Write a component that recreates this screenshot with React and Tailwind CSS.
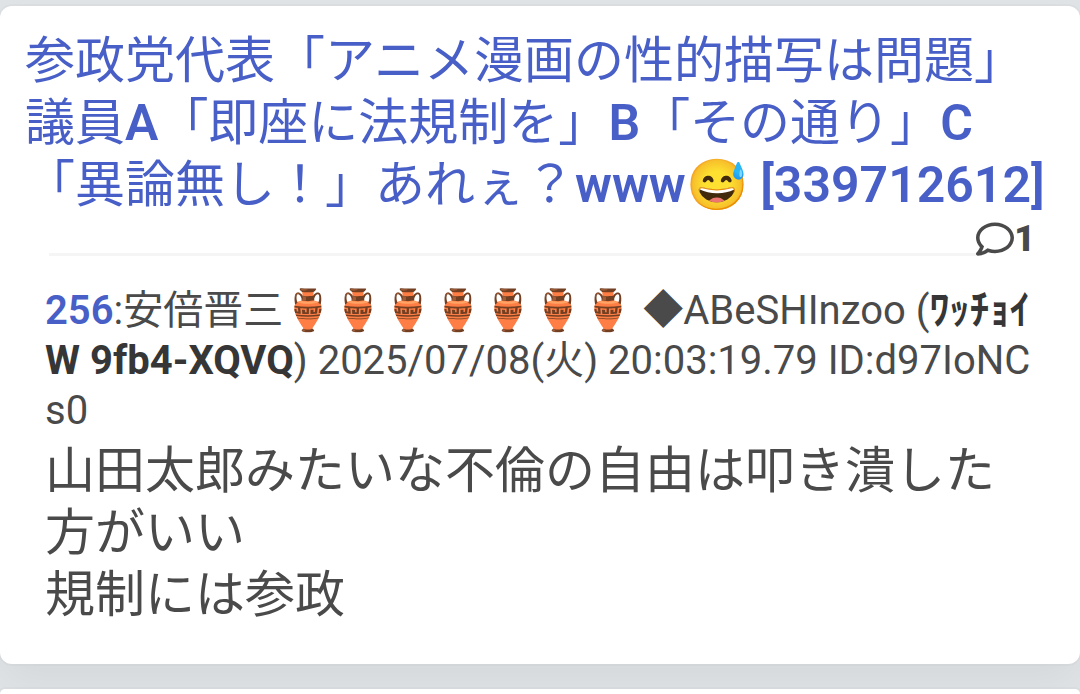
import { FaRegComment } from "react-icons/fa";

const Latin = ({ children }) => <span className="font-semibold">{children}</span>;

const ThreadTitle = () => (
  <h2 className="text-[50px] leading-[62px] font-normal text-[#485fc7]">
    <a href="#thread">
      参政党代表「アニメ漫画の性的描写は問題」議員<Latin>A</Latin>「即座に法規制を」
      <Latin>B</Latin>「その通り」<Latin>C</Latin>「異論無し！」あれぇ？
      <Latin>www</Latin>😅<Latin> [339712612]</Latin>
    </a>
  </h2>
);

const CommentDivider = ({ count }) => (
  <div className="flex items-end px-6 pt-1">
    <hr className="mb-0.5 h-[3px] flex-1 border-0 bg-[#f5f5f5]" />
    <a
      href="#comments"
      aria-label={`${count} comments`}
      className="-mr-1 flex items-center text-[38px] leading-[38px] font-black text-[#4a4a4a]"
    >
      <FaRegComment aria-hidden="true" />
      <span className="text-[36px] leading-[38px]">{count}</span>
    </a>
  </div>
);

const Post = () => (
  <article className="flex flex-col gap-1 px-5 pt-7 text-[#4a4a4a]">
    <header className="text-[40px] leading-[50px] break-all">
      <a href="#256" className="font-semibold text-[#485fc7]">256</a>
      :安倍晋三🏺🏺🏺🏺🏺🏺🏺 ◆ABeSHInzoo (
      <strong className="font-bold text-[#363636]">ﾜｯﾁｮｲ W 9fb4-XQVQ</strong>
      ) 2025/07/08(火) 20:03:19.79 ID:d97IoNCs0
    </header>
    <p className="text-[50px] leading-[62px]">
      山田太郎みたいな不倫の自由は叩き潰した方がいい
      <br />
      規制には参政
    </p>
  </article>
);

const ThreadCard = () => (
  <section className="rounded-xl bg-white px-[25px] pt-6 pb-[38px] shadow-[0_20px_40px_-5px_rgba(10,10,10,0.05),0_0_0_2px_rgba(10,10,10,0.02)]">
    <ThreadTitle />
    <CommentDivider count={1} />
    <Post />
  </section>
);

const App = () => (
  <main
    lang="ja"
    className="flex min-h-screen flex-col gap-[25px] overflow-hidden bg-[#dfe3e6] pt-1.5 font-[Roboto,'Noto_Sans_CJK_JP',sans-serif]"
  >
    <ThreadCard />
    <section className="flex-1 rounded-t-xl bg-white shadow-[0_0_0_2px_rgba(10,10,10,0.02)]" />
  </main>
);

export default App;
